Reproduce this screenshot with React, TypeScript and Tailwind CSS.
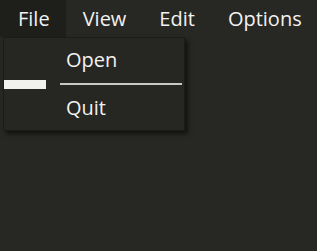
import React from 'react';

const App: React.FC = () => {
  return (
    <div
      className="w-[317px] h-[251px] bg-[#272723] text-[#f2f2f2] overflow-hidden"
      style={{ fontFamily: '"Open Sans", "Noto Sans", sans-serif' }}
    >
      <div className="flex h-[37px] items-center text-[20px] leading-none">
        <div className="h-full bg-[#1e1e1b] flex items-center pl-[18px] pr-[16px]">File</div>
        <div className="pl-[17px]">View</div>
        <div className="pl-[33px]">Edit</div>
        <div className="pl-[33px]">Options</div>
      </div>
      <div className="relative">
        <div className="absolute left-[3px] top-0 w-[182px] h-[94px] bg-[#262622] border border-[#1b1b19] shadow-[3px_3px_4px_rgba(0,0,0,0.55)] flex flex-col pt-[9px] text-[20px] leading-[26px]">
          <div className="pl-[62px]">Open</div>
          <div className="flex items-center h-[22px]">
            <div className="w-[42px] h-[9px] bg-[#f1f1ee]" />
            <div className="ml-[14px] w-[122px] h-[2px] bg-[#c8c8c4]" />
          </div>
          <div className="pl-[62px]">Quit</div>
        </div>
      </div>
    </div>
  );
};

export default App;
